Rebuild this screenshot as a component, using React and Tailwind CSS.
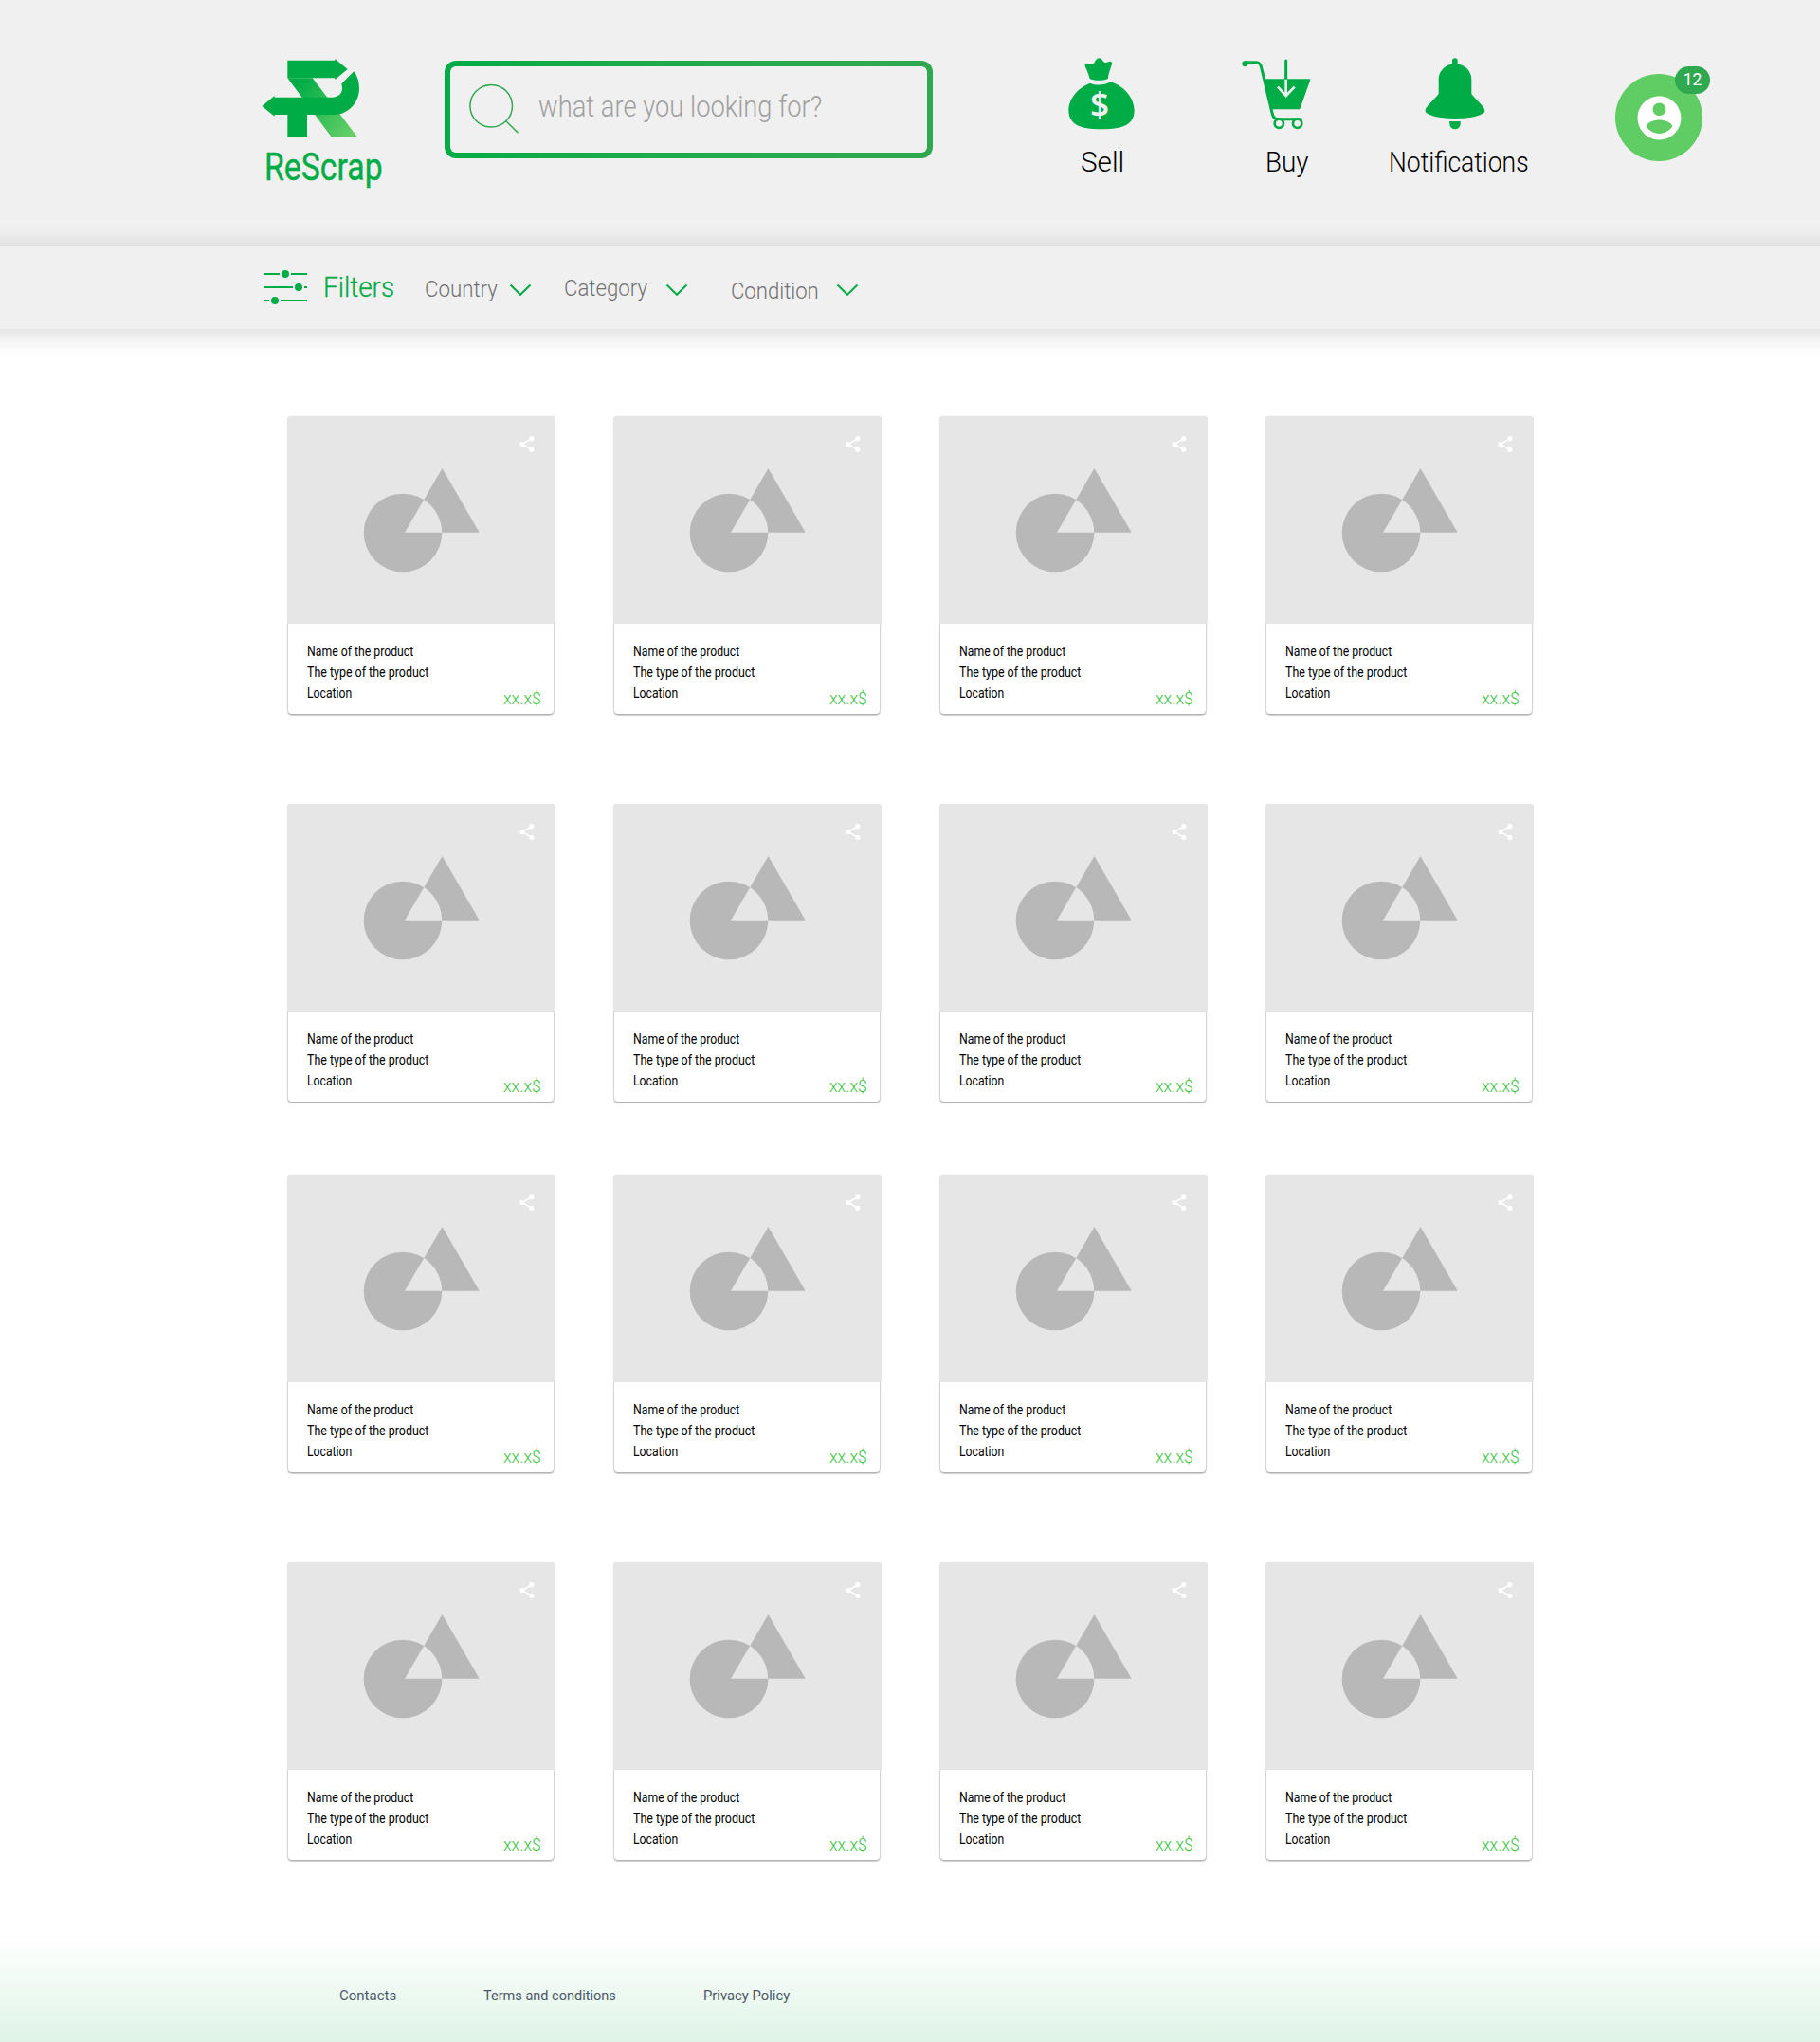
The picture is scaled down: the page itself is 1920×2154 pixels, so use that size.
import { useLayoutEffect, useRef, useState } from "react";

// Single line of text condensed horizontally to fill its box.
function Condensed({ children, className }) {
  const box = useRef(null);
  const line = useRef(null);
  const [scale, setScale] = useState(1);
  useLayoutEffect(() => {
    const fit = () => setScale(box.current.clientWidth / line.current.offsetWidth);
    fit();
    document.fonts?.ready.then(() => box.current && fit());
  }, []);
  return (
    <div ref={box} className={"whitespace-nowrap shrink-0 " + className}>
      <span ref={line} className="inline-block origin-left" style={{ transform: `scaleX(${scale})` }}>
        {children}
      </span>
    </div>
  );
}

function LogoMark() {
  return (
    <svg className="h-[85px] w-[104px]" viewBox="48 33 312 255">
      <defs>
        <linearGradient id="leg" x1="130" y1="110" x2="330" y2="270" gradientUnits="userSpaceOnUse">
          <stop offset="0.1" stopColor="#00ac46" />
          <stop offset="1" stopColor="#63ce66" />
        </linearGradient>
      </defs>
      <path d="M130 97H209L352 285H270Z" fill="url(#leg)" />
      <path d="M130 41H280V36L320 69L280 102V97H130Z" fill="#00ac46" />
      <path
        d="M49 186L89 153V158H270C290 158 304 145 303 128L301 115L340 76C352 92 357 110 357 130C357 175 322 213 278 213H192V285H130V213H89V218Z"
        fill="#00ac46"
      />
    </svg>
  );
}

function MoneyBag() {
  return (
    <svg className="h-[76px] w-[70px]" viewBox="50 35 210 228" fill="#00ac46">
      <path d="M103 57C110 53 122 59 130 53C135 48 137 37 148 36C158 37 160 49 166 50C173 51 182 42 188 49C190 58 177 78 176 100C168 107 130 109 118 101C112 80 108 72 103 62Z" />
      <path d="M119 115C135 123 165 123 183 111C220 122 258 155 259 203C258 245 225 261 155 261C85 261 51 245 51 200C52 160 85 128 119 115Z" />
      <text x="149" y="221" textAnchor="middle" fontSize="106" fontWeight="600" fontFamily="Open Sans, sans-serif" fill="#f0f0f0">
        $
      </text>
    </svg>
  );
}

function Cart() {
  return (
    <svg className="h-[76px] w-[73px]" viewBox="599 35 219 228" fill="none" stroke="#00ac46" strokeLinecap="round" strokeLinejoin="round">
      <circle cx="609" cy="54" r="9" fill="#00ac46" stroke="none" />
      <path d="M609 49H643Q656 49 660 62L696 213Q700 229 715 229H786" strokeWidth="9" />
      <path d="M672 104H814L781 196H694Z" fill="#00ac46" strokeWidth="4" />
      <circle cx="717" cy="243" r="14" strokeWidth="8" fill="#f0f0f0" />
      <circle cx="775" cy="243" r="14" strokeWidth="8" fill="#f0f0f0" />
      <path d="M739 44V102" strokeWidth="9" />
      <path d="M739 103V155M713 127L739 155L766 127" stroke="#f0f0f0" strokeWidth="8" strokeLinecap="butt" strokeLinejoin="miter" />
    </svg>
  );
}

function Bell() {
  return (
    <svg className="ml-[37px] h-[76px] w-[64px]" viewBox="188 35 192 228" fill="#00ac46">
      <path d="M275 54V44Q275 36 284 36Q292 36 292 44V54C318 60 336 78 336 104V150L368 184Q384 202 374 210C354 223 320 227 284 227C248 227 214 223 194 210Q183 202 200 184L232 150V104C232 78 250 60 275 54Z" />
      <path d="M266 236H301V244A17 17 0 0 1 267 244Z" />
    </svg>
  );
}

function Chevron({ className }) {
  return (
    <svg className={"h-[14px] w-[24px] shrink-0 " + className} viewBox="0 0 24 14" fill="none" stroke="#00ac46" strokeWidth="2">
      <path d="M1.5 1.5L12 11.8L22.5 1.5" />
    </svg>
  );
}

function Header() {
  return (
    <header className="flex h-[260px] items-start bg-[#f0f0f0] pl-[276px]">
      <div className="w-[193px] shrink-0 pt-[61px]">
        <LogoMark />
        <Condensed className="ml-[3px] mt-[11px] w-[125px] text-[40px] leading-[40px] text-[#00ac46] [-webkit-text-stroke:0.4px_#00ac46]">
          ReScrap
        </Condensed>
      </div>
      <div className="mt-[64px] h-[103px] w-[515px] shrink-0 rounded-[12px] bg-linear-to-r from-[#00ac46] to-[#2fa84f] p-[6px]">
        <div className="flex h-full rounded-[6px] bg-[#f0f0f0] pl-[20px]">
          <svg className="mt-[18px] h-[56px] w-[54px] shrink-0" viewBox="0 0 54 56" fill="none" stroke="#2fa84f" strokeWidth="1.5">
            <circle cx="23.2" cy="23.8" r="22.3" />
            <path d="M38.8 39.7L51.500 52.3" />
          </svg>
          <Condensed className="ml-[19px] mt-[23px] w-[299px] text-[31px] font-light leading-[40px] text-[#a0a0a0]">
            what are you looking for?
          </Condensed>
        </div>
      </div>
      <nav className="flex shrink-0 pt-[61px] text-[29px] font-light leading-[40px] text-black">
        <div className="ml-[143px] w-[183px]">
          <MoneyBag />
          <Condensed className="ml-[13px] mt-[14px] w-[46px]">Sell</Condensed>
        </div>
        <div className="w-[156px]">
          <Cart />
          <Condensed className="ml-[25px] mt-[14px] w-[46px]">Buy</Condensed>
        </div>
        <div className="w-[238px]">
          <Bell />
          <Condensed className="-ml-[1px] mt-[14px] w-[148px]">Notifications</Condensed>
        </div>
      </nav>
      <div className="relative mt-[78px] flex size-[92px] shrink-0 items-center justify-center rounded-full bg-[#5fcc64]">
        <svg className="size-[55px]" viewBox="0 0 24 24" fill="white">
          <path d="M12 2C6.48 2 2 6.48 2 12s4.480 10 10 10 10-4.480 10-10S17.520 2 12 2zm0 3c1.660 0 3 1.340 3 3s-1.340 3-3 3-3-1.340-3-3 1.340-3 3-3zm0 14.200c-2.500 0-4.710-1.280-6-3.220.030-1.990 4-3.080 6-3.080 1.990 0 5.970 1.090 6 3.080-1.290 1.940-3.500 3.220-6 3.220z" />
        </svg>
        <span className="absolute -top-[8px] left-[63px] flex h-[29px] w-[37px] items-center justify-center rounded-full bg-[#2fa84f] text-[17.5px] text-white">
          12
        </span>
      </div>
    </header>
  );
}

function FilterBar() {
  return (
    <div className="relative -mx-[40px] flex h-[87px] items-start bg-[#f0f0f0] pl-[318px] text-[24px] font-light leading-[40px] text-[#707070] shadow-[0_4px_26px_rgba(0,0,0,0.17)]">
      <svg className="mt-[24px] h-[38px] w-[46px] shrink-0" viewBox="0 0 46 38" stroke="#00ac46" strokeWidth="2" fill="#00ac46">
        <path d="M0 5H17M29 5H46M0 19H31M43 19H46M0 33H6M18 33H46" />
        <g stroke="none">
          <circle cx="23" cy="5" r="4" />
          <circle cx="37" cy="19" r="4" />
          <circle cx="12" cy="33" r="4" />
        </g>
      </svg>
      <Condensed className="ml-[17px] mt-[23px] w-[75px] text-[29px] text-[#00ac46] [-webkit-text-stroke:0.3px_#00ac46]">
        Filters
      </Condensed>
      <Condensed className="ml-[32px] mt-[25px] w-[77px]">Country</Condensed>
      <Chevron className="ml-[12px] mt-[39px]" />
      <Condensed className="ml-[34px] mt-[24px] w-[88px]">Category</Condensed>
      <Chevron className="ml-[19px] mt-[39px]" />
      <Condensed className="ml-[45px] mt-[27px] w-[93px]">Condition</Condensed>
      <Chevron className="ml-[18px] mt-[39px]" />
    </div>
  );
}

function ProductCard() {
  return (
    <article className="h-[314px] w-[280px] rounded-[4px] bg-white shadow-[0_1px_1px_1px_rgba(0,0,0,0.1),0_1px_2px_rgba(0,0,0,0.3)]">
      <div className="-mx-[1.5px] h-[219px] rounded-t-[3px] bg-[#e6e6e6]">
        <svg className="h-[219px] w-[283px]" viewBox="0 0 283 219">
          <path
            fillRule="evenodd"
            fill="#b8b8b8"
            d="M163.500 55L202.700 122.700H124ZM80.700 123a41.300 41.300 0 1 0 82.600 0a41.300 41.300 0 1 0 -82.600 0Z"
          />
          <g fill="white" stroke="white" strokeWidth="1.500">
            <path d="M257.800 23.700L248 29.500L257.800 35.300" fill="none" />
            <g stroke="none">
              <circle cx="257.800" cy="23.700" r="2.600" />
              <circle cx="248" cy="29.500" r="2.600" />
              <circle cx="257.800" cy="35.300" r="2.600" />
            </g>
          </g>
        </svg>
      </div>
      <div className="flex justify-between pl-[19.500px] pr-[13.500px] pt-[18px] text-[14px] leading-[22px] text-black">
        <div>
          <Condensed className="w-[112px]">Name of the product</Condensed>
          <Condensed className="w-[128px]">The type of the product</Condensed>
          <Condensed className="w-[47px]">Location</Condensed>
        </div>
        <Condensed className="mt-[50px] w-[39.500px] text-[19px] font-light text-[#3cc443]">xx.x$</Condensed>
      </div>
    </article>
  );
}

function ProductRow() {
  return (
    <div className="flex gap-[64px]">
      <ProductCard />
      <ProductCard />
      <ProductCard />
      <ProductCard />
    </div>
  );
}

function Footer() {
  return (
    <footer className="mt-[78px] flex h-[114px] bg-linear-to-b from-white to-[#dff4e7] pl-[357.500px] pt-[53px] text-[14px] leading-[24px] text-[#4c5868]">
      <Condensed className="w-[60px]">Contacts</Condensed>
      <Condensed className="ml-[92.500px] w-[140px]">Terms and conditions</Condensed>
      <Condensed className="ml-[92px] w-[91px]">Privacy Policy</Condensed>
    </footer>
  );
}

export default function App() {
  return (
    <div className="h-[2154px] w-[1920px] overflow-hidden bg-white font-['Roboto',sans-serif]">
      <Header />
      <FilterBar />
      <main className="flex flex-col pl-[304px] pt-[92px]">
        <ProductRow />
        <div className="mt-[95px]">
          <ProductRow />
        </div>
        <div className="mt-[77px]">
          <ProductRow />
        </div>
        <div className="mt-[95px]">
          <ProductRow />
        </div>
      </main>
      <Footer />
    </div>
  );
}
